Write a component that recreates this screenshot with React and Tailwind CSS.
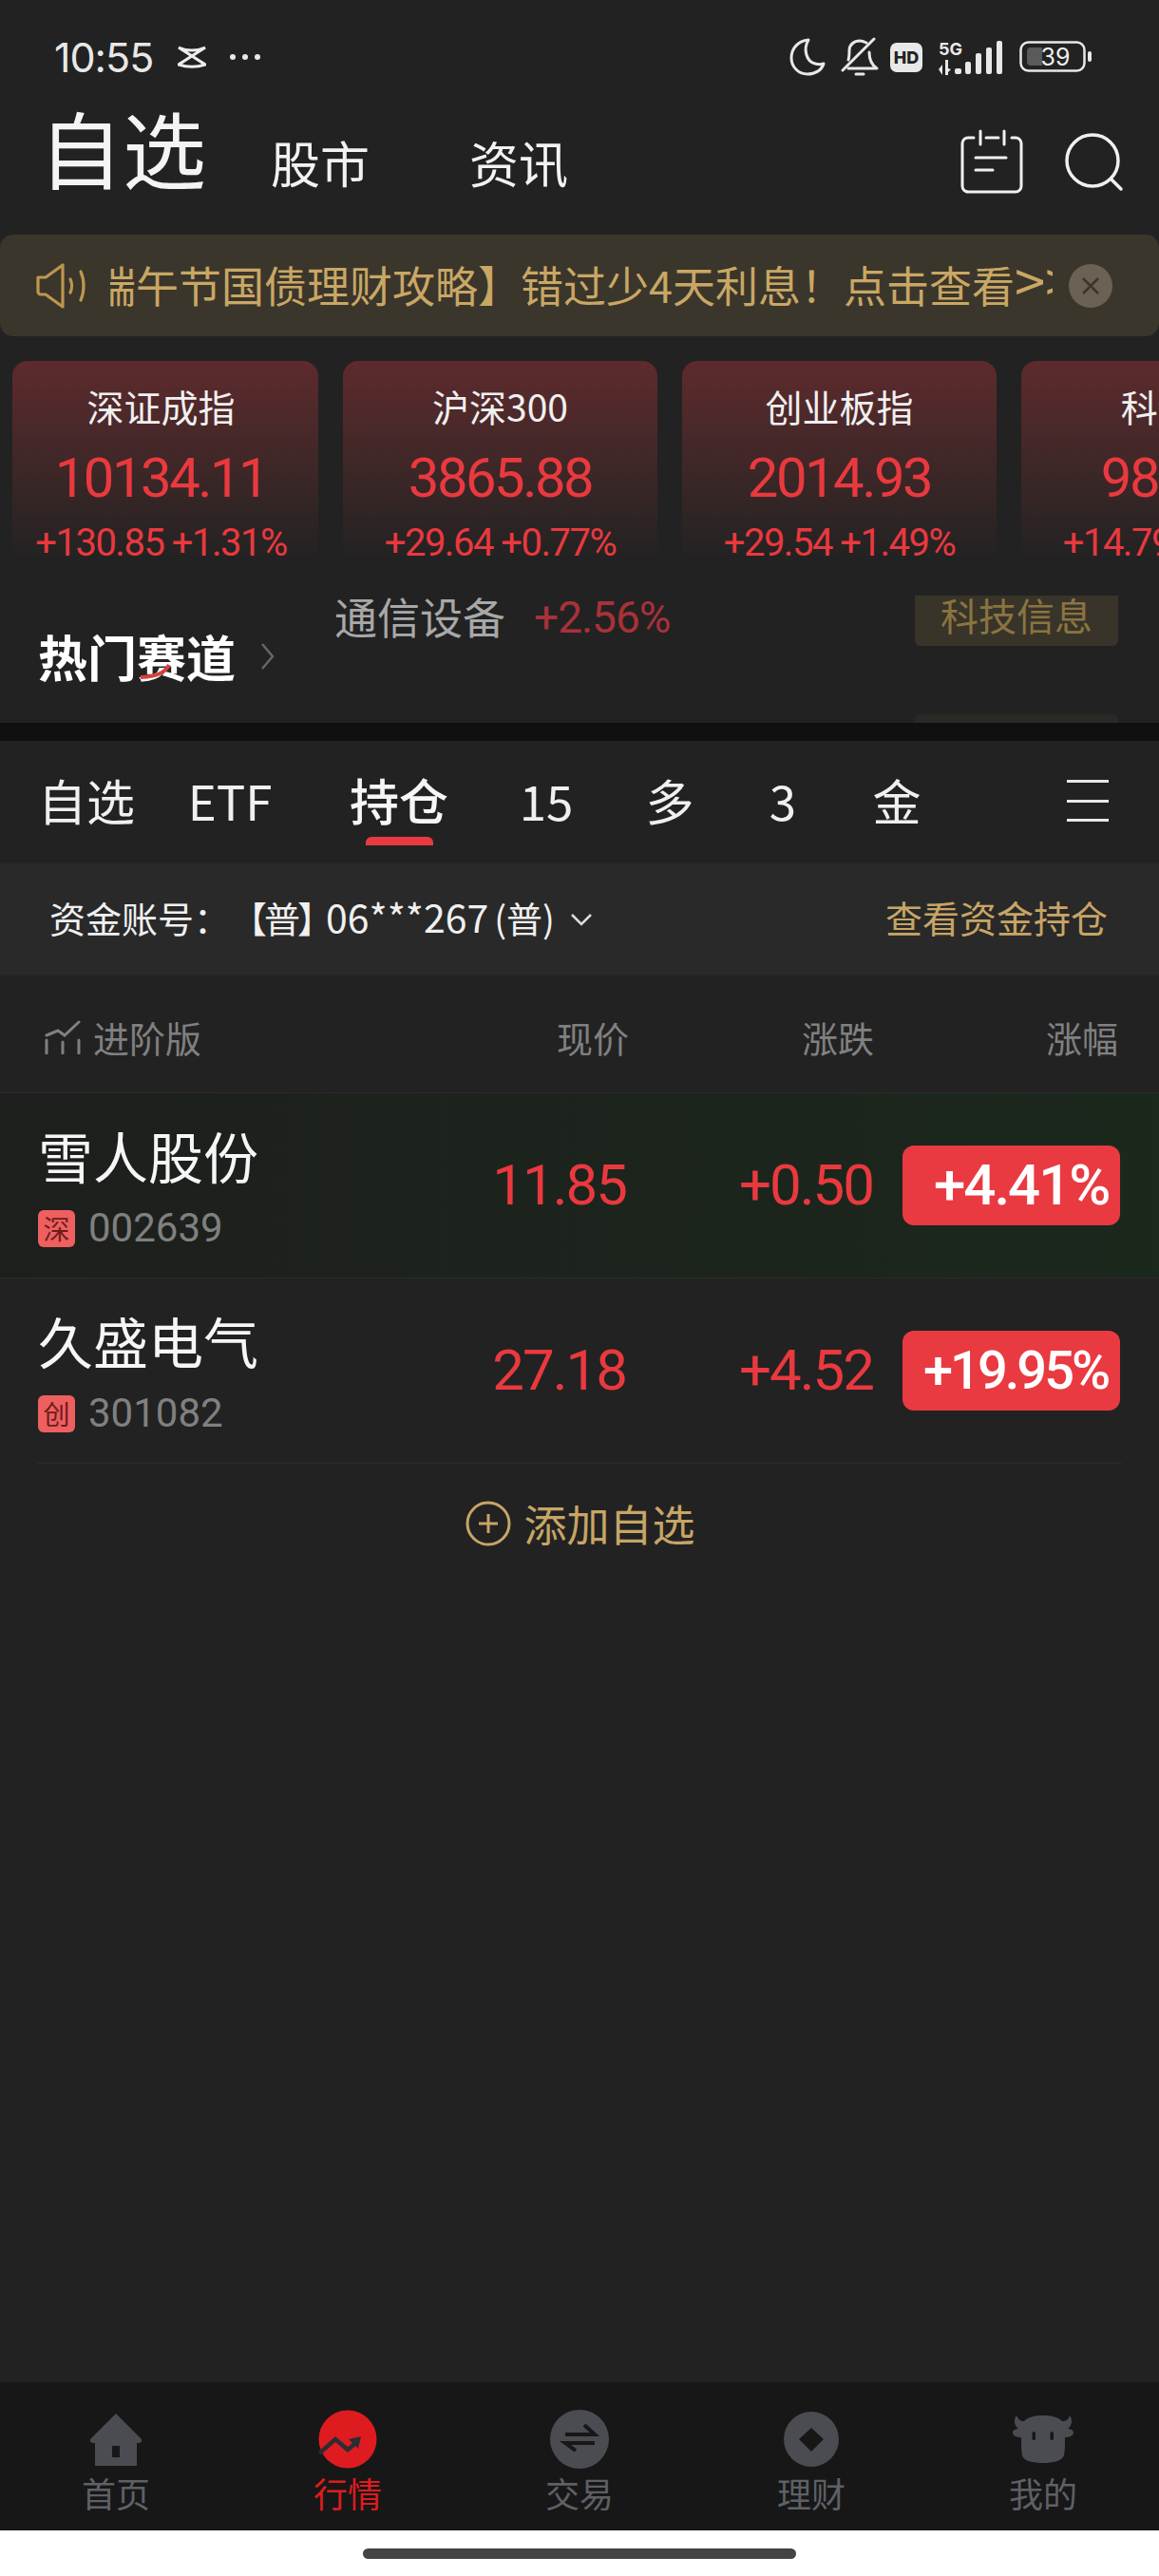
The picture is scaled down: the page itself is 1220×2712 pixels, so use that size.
import React from 'react';

const cjk = "font-['Noto_Sans_CJK_SC',sans-serif]";
const num = "font-['Roboto','Noto_Sans_CJK_SC',sans-serif]";

const indexCards = [
  { name: '深证成指', price: '10134.11', change: '+130.85 +1.31%', width: 'w-[322px] pr-[9px]' },
  { name: '沪深300', price: '3865.88', change: '+29.64 +0.77%', width: 'w-[331px]' },
  { name: '创业板指', price: '2014.93', change: '+29.54 +1.49%', width: 'w-[331px]' },
  { name: '科创50', price: '981.32', change: '+14.79 +1.53%', width: 'w-[331px]' },
];

const tabs = [
  { label: '自选', width: 'w-[182px]' },
  { label: 'ETF', width: 'w-[120px]' },
  { label: '持仓', width: 'w-[236px]', active: true },
  { label: '15', width: 'w-[74px]' },
  { label: '多', width: 'w-[186px]' },
  { label: '3', width: 'w-[52px]' },
  { label: '金', width: 'w-[188px]' },
];

const holdings = [
  { name: '雪人股份', market: '深', code: '002639', price: '11.85', change: '+0.50', pct: '+4.41%', bg: 'bg-gradient-to-r from-[#1d1f1d] to-[#1b281c]', pctStyle: 'pl-[33px] text-[60px] tracking-[-2px]' },
  { name: '久盛电气', market: '创', code: '301082', price: '27.18', change: '+4.52', pct: '+19.95%', bg: '', pctStyle: 'pl-[22px] text-[56px] tracking-[-3px]' },
];

function MoonIcon() {
  return (
    <svg width="38" height="40" viewBox="0 0 38 40" fill="none" stroke="#e8e8e8" strokeWidth="3" strokeLinejoin="round">
      <path d="M20 2C9 3 2 11 2 21c0 10 8 17 17 17 8 0 15-4 17-11-3 1-6 1-9 0C18 25 14 12 20 2Z" />
    </svg>
  );
}

function BellOffIcon() {
  return (
    <svg width="40" height="42" viewBox="0 0 40 42" fill="none" stroke="#e8e8e8" strokeWidth="3" strokeLinecap="round" strokeLinejoin="round">
      <path d="M8 24c1-3 1-7 1-10C9 8 14 4 20 4c3 0 5 1 7 2" />
      <path d="M30 16c0 7 2 13 8 17H8" />
      <path d="M2 35 35 2" />
      <path d="M16 39h8" />
    </svg>
  );
}

function SignalIcon() {
  return (
    <svg width="72" height="38" viewBox="0 0 72 38">
      <text x="4" y="17" fontSize="18" fontWeight="700" fontFamily="Inter, sans-serif" fill="#e8e8e8">5G</text>
      <path d="M4 32l4-5v11zM11 22h3v9l3 1-3 3v3h-3z" fill="#e8e8e8" />
      <rect x="21" y="31" width="7" height="6" rx="2" fill="#e8e8e8" />
      <rect x="32" y="24" width="6" height="13" rx="2" fill="#e8e8e8" />
      <rect x="43" y="15" width="6" height="22" rx="2" fill="#e8e8e8" />
      <rect x="54" y="9" width="6" height="28" rx="2" fill="#e8e8e8" />
      <rect x="65" y="2" width="6" height="35" rx="2" fill="#e8e8e8" />
    </svg>
  );
}

function BatteryIcon() {
  return (
    <svg width="76" height="34" viewBox="0 0 76 34">
      <rect x="1.5" y="1.5" width="67" height="30" rx="8" fill="none" stroke="#e8e8e8" strokeWidth="2.5" />
      <path d="M12 7h12v19H12a4 4 0 0 1-4-4V11a4 4 0 0 1 4-4Z" fill="#5a5a5a" />
      <rect x="72" y="11" width="4" height="11" rx="2" fill="#e8e8e8" />
      <text x="38" y="26" fontSize="25" textAnchor="middle" fontFamily="Inter, sans-serif" fill="#f0f0f0">39</text>
    </svg>
  );
}

function NavHome() {
  return (
    <svg width="58" height="56" viewBox="0 0 58 56" fill="#4b4c52">
      <path d="M29 1 55 27c2 2 1 5-2 5h-2v24H7V32H5c-3 0-4-3-2-5Z" />
      <rect x="25" y="35" width="8" height="12" fill="#171717" />
    </svg>
  );
}

function NavQuote() {
  return (
    <svg width="62" height="62" viewBox="0 0 62 62">
      <circle cx="31" cy="31" r="30.5" fill="#de1c1f" />
      <path d="M1 46 18 31l13 11 11-9" fill="none" stroke="#2c2d33" strokeWidth="4.5" />
      <path d="M32 31l13-3-3 13z" fill="#2c2d33" />
    </svg>
  );
}

function NavTrade() {
  return (
    <svg width="62" height="64" viewBox="0 0 62 64">
      <circle cx="31" cy="32" r="31" fill="#4b4c52" />
      <path d="M16 27h31L36 17" fill="none" stroke="#171717" strokeWidth="4" />
      <path d="M47 36H16l11 8" fill="none" stroke="#171717" strokeWidth="4" />
    </svg>
  );
}

function NavWealth() {
  return (
    <svg width="58" height="58" viewBox="0 0 58 58">
      <circle cx="29" cy="29" r="29" fill="#4b4c52" />
      <path d="M29 17 42 29 29 42 16 29Z" fill="#171717" />
    </svg>
  );
}

function NavMine() {
  return (
    <svg width="64" height="52" viewBox="0 0 64 52" fill="#4b4c52">
      <path d="M4 1C6 5 8 7 12 7 17 2 24 1 32 1s15 1 20 6c4 0 7-2 8-6 3 4 3 10-2 14 2 0 6 1 6 4s-4 5-9 5c0 8 0 14-1 19-2 6-12 8-22 8s-21-2-22-8c-1-5-1-11-1-19-5 0-9-2-9-5s4-4 6-4C1 11 1 5 4 1Z" />
      <rect x="20.5" y="18" width="3.5" height="9" rx="1.7" fill="#171717" />
      <rect x="39.5" y="18" width="3.5" height="9" rx="1.7" fill="#171717" />
    </svg>
  );
}

const navItems = [
  { label: '首页', icon: <NavHome /> },
  { label: '行情', icon: <NavQuote />, active: true },
  { label: '交易', icon: <NavTrade /> },
  { label: '理财', icon: <NavWealth /> },
  { label: '我的', icon: <NavMine /> },
];

export default function App() {
  return (
    <div className={`w-[1220px] h-[2712px] flex flex-col overflow-hidden bg-[#222222] ${cjk}`}>
      {/* status bar */}
      <div className="h-[120px] shrink-0 flex items-center justify-between pl-[57px] pr-[71px]">
        <div className="flex items-center">
          <span className="text-[43px] leading-none text-[#e8e8e8] tracking-[-1px] font-['Inter',sans-serif]">10:55</span>
          <svg className="ml-[26px]" width="30" height="24" viewBox="0 0 30 24" fill="none" stroke="#eeeeee" strokeWidth="3">
            <path d="M1 2c9 4 19 4 28 0L1 20c9 3 19 3 28 0Z" />
          </svg>
          <div className="ml-[25px] flex gap-[7px]">
            <span className="w-[6px] h-[6px] rounded-full bg-[#e8e8e8]" />
            <span className="w-[6px] h-[6px] rounded-full bg-[#e8e8e8]" />
            <span className="w-[6px] h-[6px] rounded-full bg-[#e8e8e8]" />
          </div>
        </div>
        <div className="flex items-center">
          <MoonIcon />
          <div className="ml-[16px]"><BellOffIcon /></div>
          <div className="ml-[12px] w-[34px] h-[31px] rounded-[7px] bg-[#e8e8e8] flex items-center justify-center text-[18px] font-extrabold text-[#222222] font-['Inter',sans-serif]">HD</div>
          <div className="ml-[13px]"><SignalIcon /></div>
          <div className="ml-[17px]"><BatteryIcon /></div>
        </div>
      </div>

      {/* title row */}
      <div className="h-[127px] shrink-0 flex pl-[41px] pr-[37px]">
        <span className="text-[88px] leading-none h-[88px] -mt-[10px] text-[#f4f4f4]">自选</span>
        <span className="ml-[68px] mt-[25px] text-[52px] leading-none text-[#f2f2f2]">股市</span>
        <span className="ml-[105px] mt-[25px] text-[52px] leading-none text-[#f2f2f2]">资讯</span>
        <div className="ml-auto flex items-start">
          <svg className="mt-[16px]" width="66" height="68" viewBox="0 0 66 68" fill="none" stroke="#f0f0f0" strokeWidth="3" strokeLinecap="round">
            <path d="M14 9H8a6 6 0 0 0-6 6v45a6 6 0 0 0 6 6h50a6 6 0 0 0 6-6V15a6 6 0 0 0-6-6h-4" />
            <path d="M21 2v14M46 2v14M27 9h13" />
            <path d="M16 30h32M16 43h18" />
          </svg>
          <svg className="ml-[44px] mt-[20px]" width="62" height="62" viewBox="0 0 62 62" fill="none" stroke="#f0f0f0" strokeWidth="3.5" strokeLinecap="round">
            <circle cx="29" cy="29" r="27" />
            <path d="M49 49l10 10" />
          </svg>
        </div>
      </div>

      {/* notice banner */}
      <div className="h-[107px] shrink-0 rounded-[14px] bg-[#3b362b] flex items-center pl-[38px] text-[#c9a765]">
        <svg width="54" height="48" viewBox="0 0 54 48" fill="none" stroke="#bd964f" strokeWidth="3.2" strokeLinejoin="round" strokeLinecap="round">
          <path d="M2 15h8L28 2v44L10 33H5a3 3 0 0 1-3-3Z" />
          <path d="M36 17c2 4 2 10 0 14" />
          <path d="M47 9c4 9 4 21 0 30" />
        </svg>
        <div className="ml-[24px] w-[992px] overflow-hidden whitespace-nowrap">
          <div className="-ml-[18px] -mt-[7px] text-[45px] leading-[60px]">端午节国债理财攻略】错过少4天利息！点击查看<span className="text-[58px] leading-none">&gt;&gt;</span></div>
        </div>
        <div className="ml-[17px] w-[46px] h-[46px] rounded-full bg-[#6b6253] flex items-center justify-center">
          <svg width="22" height="22" viewBox="0 0 22 22" stroke="#3b362b" strokeWidth="2.5">
            <path d="M3 3l16 16M19 3 3 19" />
          </svg>
        </div>
      </div>

      {/* index cards */}
      <div className="mt-[26px] h-[210px] shrink-0 flex gap-[26px] pl-[13px] overflow-hidden">
        {indexCards.map((card) => (
          <div key={card.name} className={`${card.width} shrink-0 rounded-t-[16px] bg-gradient-to-b from-[#5e2a2d] to-[#222222] flex flex-col items-center whitespace-nowrap overflow-hidden`}>
            <div className="mt-[19px] text-[39px] leading-[56px] text-[#f0f0f0]">{card.name}</div>
            <div className={`mt-[14px] text-[58px] leading-[68px] tracking-[-2.5px] text-[#e9393f] ${num}`}>{card.price}</div>
            <div className={`mt-[13px] text-[40px] leading-[44px] tracking-[-1.5px] text-[#e9393f] ${num}`}>{card.change}</div>
          </div>
        ))}
      </div>

      {/* hot sectors ticker */}
      <div className="h-[171px] shrink-0 flex pl-[40px] pr-[43px]">
        <div className="mt-[70px] flex items-center h-[62px]">
          <span className="relative text-[52px] leading-none font-bold text-white">
            热门赛道
            <svg className="absolute left-[106px] top-[34px]" width="34" height="16" viewBox="0 0 34 16" fill="none" stroke="#d8403f" strokeWidth="4">
              <path d="M32 1C28 8 22 13 2 14" />
            </svg>
          </span>
          <svg className="ml-[26px]" width="16" height="30" viewBox="0 0 16 30" fill="none" stroke="#666666" strokeWidth="2.5">
            <path d="M2 2l11 13L2 28" />
          </svg>
        </div>
        <div className="ml-[62px] mt-[29px] flex items-start h-[60px]">
          <span className="text-[45px] leading-[60px] text-[#a8a8a8]">通信设备</span>
          <span className={`ml-[30px] mt-[1px] text-[46px] leading-[60px] tracking-[-1px] text-[#a93139] ${num}`}>+2.56%</span>
        </div>
        <div className="ml-auto flex flex-col justify-between">
          <div className="mt-[37px] w-[214px] h-[53px] rounded-b-[6px] bg-[#38342a] text-[40px] leading-[40px] text-center text-[#8b7440]">科技信息</div>
          <div className="w-[214px] h-[9px] rounded-t-[6px] bg-[#2a2926]" />
        </div>
      </div>
      <div className="h-[19px] shrink-0 bg-[#101010]" />

      {/* list tabs */}
      <div className="h-[129px] shrink-0 flex">
        {tabs.map((tab) => (
          <div key={tab.label} className={`${tab.width} flex flex-col items-center`}>
            <div className={`mt-[20px] h-[81px] leading-[84px] ${tab.active ? 'text-[52px] font-medium text-[#f6f6f6]' : 'text-[51px] text-[#f0f0f0]'}`}>{tab.label}</div>
            {tab.active && <div className="w-[71px] h-[9px] rounded-t-[6px] bg-[#e93a42]" />}
          </div>
        ))}
        <div className="ml-[85px] mt-[41px] w-[44px] h-[44px] flex flex-col justify-between">
          <div className="h-[3px] bg-[#e8e8e8]" />
          <div className="h-[3px] bg-[#e8e8e8]" />
          <div className="h-[3px] bg-[#e8e8e8]" />
        </div>
      </div>

      {/* account bar */}
      <div className="h-[118px] shrink-0 bg-[#292929] flex items-center justify-between pl-[52px] pr-[54px] pb-[6px]">
        <div className="flex items-center text-[38px] text-[#f0f0f0]">
          <span>资金账号：</span>
          <span className="ml-[1px] tracking-[-3px]">【普】</span>
          <span className="-ml-[5px] text-[41px]">06***267</span>
          <span className="ml-[6px]">(普)</span>
          <svg className="ml-[16px] mt-[6px]" width="24" height="14" viewBox="0 0 24 14" fill="none" stroke="#dddddd" strokeWidth="2.5">
            <path d="M2 2l10 10L22 2" />
          </svg>
        </div>
        <span className="text-[39px] text-[#c7a566]">查看资金持仓</span>
      </div>

      {/* column headers */}
      <div className="h-[123px] shrink-0 flex items-center pt-[6px] pl-[47px] pr-[43px] text-[38px] text-[#808080]">
        <svg width="38" height="36" viewBox="0 0 38 36" fill="none" stroke="#808080" strokeWidth="3" strokeLinecap="round">
          <path d="M2 16 14 11l7 5L36 2" />
          <path d="M2 21v14M19 23v12M36 21v14" />
        </svg>
        <span className="ml-[13px] flex-1">进阶版</span>
        <span className="w-[76px] text-right mr-[182px]">现价</span>
        <span className="w-[76px] text-right mr-[181px]">涨跌</span>
        <span className="w-[76px] text-right">涨幅</span>
      </div>

      {/* holdings */}
      {holdings.map((row) => (
        <div key={row.code} className={`h-[195px] shrink-0 ${row.bg} border-t border-[#2b2b2b] flex items-center pl-[40px] pr-[41px]`}>
          <div className="flex-1">
            <div className="text-[58px] leading-[70px] text-[#f6f6f6]">{row.name}</div>
            <div className="mt-[20px] flex items-center">
              <span className="w-[39px] h-[39px] rounded-[6px] bg-[#ee5f60] flex items-center justify-center text-[28px] text-[#6e1b1d]">{row.market}</span>
              <span className={`ml-[14px] text-[42px] leading-[44px] text-[#808080] ${num}`}>{row.code}</span>
            </div>
          </div>
          <span className={`text-[60px] tracking-[-2px] text-[#e9393f] mr-[119px] ${num}`}>{row.price}</span>
          <span className={`text-[60px] tracking-[-2px] text-[#e9393f] mr-[31px] ${num}`}>{row.change}</span>
          <div className={`w-[229px] h-[84px] rounded-[12px] bg-[#e93a42] flex items-center ${row.pctStyle} font-medium text-white ${num}`}>{row.pct}</div>
        </div>
      ))}

      {/* add to watchlist */}
      <div className="h-[134px] shrink-0 border-t border-[#2b2b2b] mx-[39px] flex items-center justify-center pb-[8px] text-[#c7a566]">
        <svg className="ml-[2px]" width="48" height="48" viewBox="0 0 48 48" fill="none" stroke="#c7a566" strokeWidth="3">
          <circle cx="24" cy="24" r="22" />
          <path d="M14 24h20M24 14v20" />
        </svg>
        <span className="ml-[13px] text-[45px] leading-none">添加自选</span>
      </div>

      <div className="flex-1" />

      {/* bottom navigation */}
      <div className="h-[156px] shrink-0 bg-[#171717] flex">
        {navItems.map((item) => (
          <div key={item.label} className="w-[244px] flex flex-col items-center">
            <div className="mt-[27px] h-[66px] flex items-center justify-center">{item.icon}</div>
            <div className={`mt-[1px] text-[36px] leading-[44px] ${item.active ? 'text-[#de1c1f]' : 'text-[#5e6066]'}`}>{item.label}</div>
          </div>
        ))}
      </div>
      <div className="h-[48px] shrink-0 bg-white flex justify-center pt-[19px]">
        <div className="w-[456px] h-[11px] rounded-full bg-[#444444]" />
      </div>
    </div>
  );
}
